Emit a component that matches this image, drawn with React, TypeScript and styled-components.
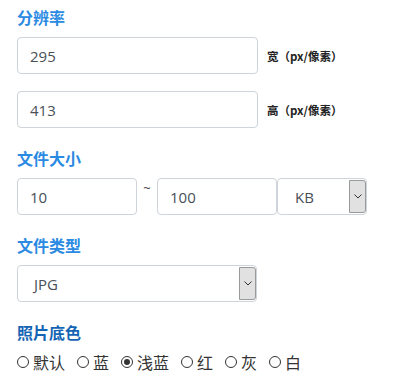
import React from "react";
import styled, { createGlobalStyle } from "styled-components";

const GlobalStyle = createGlobalStyle`
  body {
    margin: 0;
    background: #fff;
    font-family: "Open Sans", "Noto Sans CJK SC", sans-serif;
  }
`;

const Page = styled.div`
  padding: 6px 0 0 17px;
  width: 381px;
`;

const Heading = styled.div<{ $dark?: boolean }>`
  font-family: "Noto Sans CJK SC", sans-serif;
  font-size: 16px;
  font-weight: 700;
  line-height: 22px;
  color: ${(p) => (p.$dark ? "#1565b4" : "#2b8ae2")};
  margin: 0 0 9px;
`;

const Section = styled.div<{ $gap?: number }>`
  margin-bottom: ${(p) => p.$gap ?? 19}px;
`;

const Row = styled.div`
  display: flex;
  align-items: center;
  & + & {
    margin-top: 17px;
  }
`;

const Field = styled.input<{ $w: number }>`
  box-sizing: border-box;
  width: ${(p) => p.$w}px;
  height: 37px;
  padding: 0 12px;
  border: 1px solid #ced4da;
  border-radius: 4px;
  font-family: "Open Sans", sans-serif;
  font-size: 15px;
  color: #495057;
  background: #fff;
  outline: none;
`;

const Unit = styled.span`
  margin-left: 9px;
  font-family: "Noto Sans CJK SC", sans-serif;
  font-size: 11.5px;
  font-weight: 700;
  color: #222;
`;

const Tilde = styled.span`
  width: 20px;
  text-align: center;
  align-self: flex-start;
  margin-top: 1px;
  font-size: 13px;
  color: #444;
`;

const SelectBox = styled.div<{ $w: number; $pad: number }>`
  box-sizing: border-box;
  width: ${(p) => p.$w}px;
  height: 37px;
  display: flex;
  align-items: stretch;
  border: 1px solid #ced4da;
  border-radius: 4px;
  background: #fff;
  overflow: hidden;
  padding-left: ${(p) => p.$pad}px;
`;

const SelectValue = styled.span`
  flex: 1;
  display: flex;
  align-items: center;
  font-family: "Open Sans", sans-serif;
  font-size: 15px;
  color: #495057;
`;

const ArrowButton = styled.span`
  box-sizing: border-box;
  width: 17px;
  margin: 1px 0;
  display: flex;
  align-items: center;
  justify-content: center;
  background: #e1e1e1;
  border: 1px solid #9a9a9a;
  border-radius: 0 3px 3px 0;
`;

const RadioRow = styled.div`
  display: flex;
  align-items: center;
  gap: 12px;
  margin-top: -1px;
`;

const RadioItem = styled.label`
  display: flex;
  align-items: center;
  gap: 4px;
  font-family: "Noto Sans CJK SC", sans-serif;
  font-size: 16px;
  color: #333;
  line-height: 22px;
`;

const RadioDot = styled.span<{ $on?: boolean }>`
  box-sizing: border-box;
  width: 12px;
  height: 12px;
  border: 1px solid #333;
  border-radius: 50%;
  display: flex;
  align-items: center;
  justify-content: center;
  &::after {
    content: "";
    display: ${(p) => (p.$on ? "block" : "none")};
    width: 6px;
    height: 6px;
    border-radius: 50%;
    background: #333;
  }
`;

const Chevron = () => (
  <svg width="8" height="5" viewBox="0 0 8 5">
    <path d="M0.5 0.5 L4 4 L7.5 0.5" fill="none" stroke="#333" strokeWidth="1" />
  </svg>
);

const colors = ["默认", "蓝", "浅蓝", "红", "灰", "白"];

export default function App() {
  return (
    <>
      <GlobalStyle />
      <Page>
        <Section>
          <Heading>分辨率</Heading>
          <Row>
            <Field $w={241} defaultValue="295" />
            <Unit>宽（px/像素）</Unit>
          </Row>
          <Row>
            <Field $w={241} defaultValue="413" />
            <Unit>高（px/像素）</Unit>
          </Row>
        </Section>
        <Section>
          <Heading>文件大小</Heading>
          <Row>
            <Field $w={120} defaultValue="10" />
            <Tilde>~</Tilde>
            <Field $w={120} defaultValue="100" />
            <SelectBox $w={90} $pad={17}>
              <SelectValue>KB</SelectValue>
              <ArrowButton>
                <Chevron />
              </ArrowButton>
            </SelectBox>
          </Row>
        </Section>
        <Section>
          <Heading>文件类型</Heading>
          <SelectBox $w={240} $pad={16}>
            <SelectValue>JPG</SelectValue>
            <ArrowButton>
              <Chevron />
            </ArrowButton>
          </SelectBox>
        </Section>
        <Section>
          <Heading $dark>照片底色</Heading>
          <RadioRow>
            {colors.map((c) => (
              <RadioItem key={c}>
                <RadioDot $on={c === "浅蓝"} />
                {c}
              </RadioItem>
            ))}
          </RadioRow>
        </Section>
      </Page>
    </>
  );
}
